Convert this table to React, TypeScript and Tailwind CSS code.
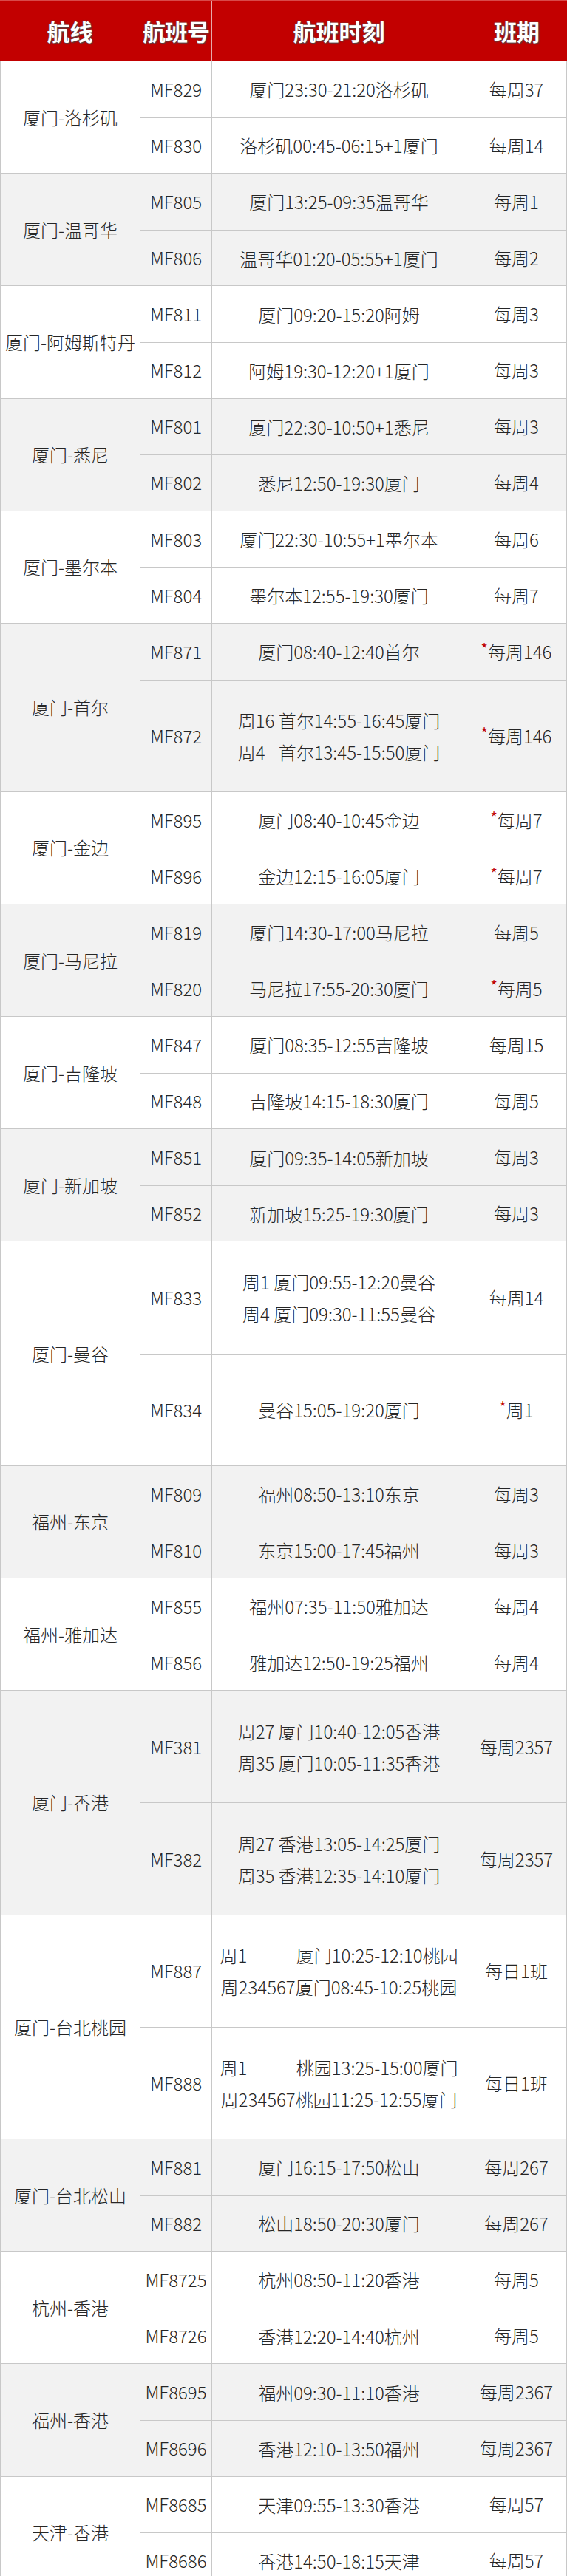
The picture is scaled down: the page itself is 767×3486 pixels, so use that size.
import React from "react";

type Flight = {
  no: string;
  time?: string[];
  prefix?: [string, string][];
  split?: { a: string; b: string; c: string };
  sched: string;
  star?: boolean;
  tall?: boolean;
};

type Group = { route: string; flights: Flight[] };

const groups: Group[] = [
  {
    route: "厦门-洛杉矶",
    flights: [
      { no: "MF829", time: ["厦门23:30-21:20洛杉矶"], sched: "每周37" },
      { no: "MF830", time: ["洛杉矶00:45-06:15+1厦门"], sched: "每周14" },
    ],
  },
  {
    route: "厦门-温哥华",
    flights: [
      { no: "MF805", time: ["厦门13:25-09:35温哥华"], sched: "每周1" },
      { no: "MF806", time: ["温哥华01:20-05:55+1厦门"], sched: "每周2" },
    ],
  },
  {
    route: "厦门-阿姆斯特丹",
    flights: [
      { no: "MF811", time: ["厦门09:20-15:20阿姆"], sched: "每周3" },
      { no: "MF812", time: ["阿姆19:30-12:20+1厦门"], sched: "每周3" },
    ],
  },
  {
    route: "厦门-悉尼",
    flights: [
      { no: "MF801", time: ["厦门22:30-10:50+1悉尼"], sched: "每周3" },
      { no: "MF802", time: ["悉尼12:50-19:30厦门"], sched: "每周4" },
    ],
  },
  {
    route: "厦门-墨尔本",
    flights: [
      { no: "MF803", time: ["厦门22:30-10:55+1墨尔本"], sched: "每周6" },
      { no: "MF804", time: ["墨尔本12:55-19:30厦门"], sched: "每周7" },
    ],
  },
  {
    route: "厦门-首尔",
    flights: [
      { no: "MF871", time: ["厦门08:40-12:40首尔"], sched: "每周146", star: true },
      {
        no: "MF872",
        prefix: [
          ["周16", "首尔14:55-16:45厦门"],
          ["周4", "首尔13:45-15:50厦门"],
        ],
        sched: "每周146",
        star: true,
        tall: true,
      },
    ],
  },
  {
    route: "厦门-金边",
    flights: [
      { no: "MF895", time: ["厦门08:40-10:45金边"], sched: "每周7", star: true },
      { no: "MF896", time: ["金边12:15-16:05厦门"], sched: "每周7", star: true },
    ],
  },
  {
    route: "厦门-马尼拉",
    flights: [
      { no: "MF819", time: ["厦门14:30-17:00马尼拉"], sched: "每周5" },
      { no: "MF820", time: ["马尼拉17:55-20:30厦门"], sched: "每周5", star: true },
    ],
  },
  {
    route: "厦门-吉隆坡",
    flights: [
      { no: "MF847", time: ["厦门08:35-12:55吉隆坡"], sched: "每周15" },
      { no: "MF848", time: ["吉隆坡14:15-18:30厦门"], sched: "每周5" },
    ],
  },
  {
    route: "厦门-新加坡",
    flights: [
      { no: "MF851", time: ["厦门09:35-14:05新加坡"], sched: "每周3" },
      { no: "MF852", time: ["新加坡15:25-19:30厦门"], sched: "每周3" },
    ],
  },
  {
    route: "厦门-曼谷",
    flights: [
      {
        no: "MF833",
        time: ["周1 厦门09:55-12:20曼谷", "周4 厦门09:30-11:55曼谷"],
        sched: "每周14",
        tall: true,
      },
      { no: "MF834", time: ["曼谷15:05-19:20厦门"], sched: "周1", star: true, tall: true },
    ],
  },
  {
    route: "福州-东京",
    flights: [
      { no: "MF809", time: ["福州08:50-13:10东京"], sched: "每周3" },
      { no: "MF810", time: ["东京15:00-17:45福州"], sched: "每周3" },
    ],
  },
  {
    route: "福州-雅加达",
    flights: [
      { no: "MF855", time: ["福州07:35-11:50雅加达"], sched: "每周4" },
      { no: "MF856", time: ["雅加达12:50-19:25福州"], sched: "每周4" },
    ],
  },
  {
    route: "厦门-香港",
    flights: [
      {
        no: "MF381",
        time: ["周27 厦门10:40-12:05香港", "周35 厦门10:05-11:35香港"],
        sched: "每周2357",
        tall: true,
      },
      {
        no: "MF382",
        time: ["周27 香港13:05-14:25厦门", "周35 香港12:35-14:10厦门"],
        sched: "每周2357",
        tall: true,
      },
    ],
  },
  {
    route: "厦门-台北桃园",
    flights: [
      {
        no: "MF887",
        split: { a: "周1", b: "厦门10:25-12:10桃园", c: "周234567厦门08:45-10:25桃园" },
        sched: "每日1班",
        tall: true,
      },
      {
        no: "MF888",
        split: { a: "周1", b: "桃园13:25-15:00厦门", c: "周234567桃园11:25-12:55厦门" },
        sched: "每日1班",
        tall: true,
      },
    ],
  },
  {
    route: "厦门-台北松山",
    flights: [
      { no: "MF881", time: ["厦门16:15-17:50松山"], sched: "每周267" },
      { no: "MF882", time: ["松山18:50-20:30厦门"], sched: "每周267" },
    ],
  },
  {
    route: "杭州-香港",
    flights: [
      { no: "MF8725", time: ["杭州08:50-11:20香港"], sched: "每周5" },
      { no: "MF8726", time: ["香港12:20-14:40杭州"], sched: "每周5" },
    ],
  },
  {
    route: "福州-香港",
    flights: [
      { no: "MF8695", time: ["福州09:30-11:10香港"], sched: "每周2367" },
      { no: "MF8696", time: ["香港12:10-13:50福州"], sched: "每周2367" },
    ],
  },
  {
    route: "天津-香港",
    flights: [
      { no: "MF8685", time: ["天津09:55-13:30香港"], sched: "每周57" },
      { no: "MF8686", time: ["香港14:50-18:15天津"], sched: "每周57" },
    ],
  },
];

function TimeCell({ f }: { f: Flight }) {
  if (f.prefix) {
    return (
      <div className="flex flex-col items-start leading-[43px]">
        {f.prefix.map(([p, t], i) => (
          <div key={i} className="flex whitespace-nowrap">
            <span className="w-[55px]">{p}</span>
            <span>{t}</span>
          </div>
        ))}
      </div>
    );
  }
  if (f.split) {
    return (
      <div className="flex w-[322px] flex-col leading-[43px]">
        <div className="flex justify-between whitespace-nowrap">
          <span>{f.split.a}</span>
          <span>{f.split.b}</span>
        </div>
        <div className="whitespace-nowrap text-center">{f.split.c}</div>
      </div>
    );
  }
  return (
    <div className="flex flex-col items-center leading-[43px]">
      {(f.time || []).map((t, i) => (
        <div key={i} className="whitespace-pre">
          {t}
        </div>
      ))}
    </div>
  );
}

export default function App() {
  return (
    <div className="w-[767px] bg-white font-['Noto_Sans_CJK_SC','Noto_Sans',sans-serif] text-[24px] font-light text-[#262626]">
      <div className="flex h-[83px] border-t border-[#d84a4a] bg-[#c20000] text-[31px] font-bold text-white [text-shadow:0_0_2px_#555,1px_1px_2px_#444]">
        <div className="flex w-[190px] items-center justify-center border-r border-[#e7a9a9]">航线</div>
        <div className="flex w-[97px] items-center justify-center border-r border-[#e7a9a9] tracking-[-1px]">航班号</div>
        <div className="flex w-[344px] items-center justify-center border-r border-[#e7a9a9]">航班时刻</div>
        <div className="flex w-[136px] items-center justify-center">班期</div>
      </div>
      {groups.map((g, gi) => (
        <div
          key={g.route}
          className={
            gi % 2 === 1
              ? "flex border-b border-[#c8c8c8] bg-[#f2f2f2]"
              : "flex border-b border-[#c8c8c8] bg-white"
          }
        >
          <div className="flex w-[190px] items-center justify-center whitespace-nowrap border-x border-[#c8c8c8]">
            {g.route}
          </div>
          <div className="flex flex-1 flex-col">
            {g.flights.map((f, fi) => (
              <div
                key={f.no}
                className={
                  (f.tall ? "h-[151.2px] " : "h-[75.6px] ") +
                  (fi > 0 ? "flex border-t border-[#c8c8c8]" : "flex")
                }
              >
                <div className="flex w-[97px] items-center justify-center border-r border-[#c8c8c8]">
                  {f.no}
                </div>
                <div className="flex w-[344px] items-center justify-center border-r border-[#c8c8c8]">
                  <TimeCell f={f} />
                </div>
                <div className="flex w-[136px] items-center justify-center whitespace-nowrap border-r border-[#c8c8c8]">
                  <span className="flex items-start leading-[34px]">
                    {f.star && (
                      <span className="mt-[3px] text-[20px] font-normal leading-none text-[#c00000]">*</span>
                    )}
                    <span>{f.sched}</span>
                  </span>
                </div>
              </div>
            ))}
          </div>
        </div>
      ))}
    </div>
  );
}
